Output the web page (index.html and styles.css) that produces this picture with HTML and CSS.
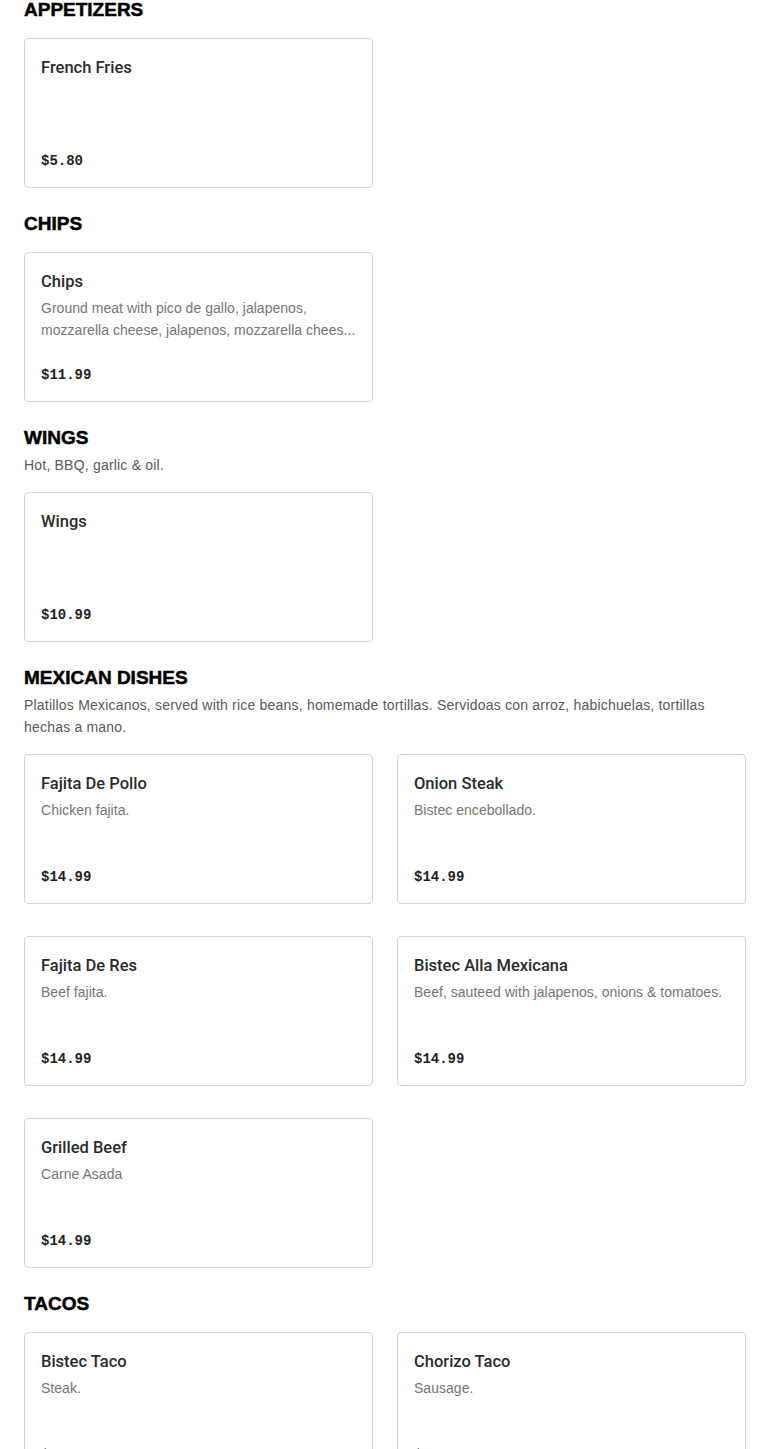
FILE: index.html
```html
<!DOCTYPE html>
<html lang="en">
<head>
<meta charset="utf-8">
<title>Menu</title>
<link rel="stylesheet" href="styles.css">
</head>
<body>
<main class="menu">
  <section class="section">
    <h2 class="section-title">APPETIZERS</h2>
    <div class="grid">
      <article class="card">
        <h3 class="item-name">French Fries</h3>
        <div class="price">$5.80</div>
      </article>
    </div>
  </section>

  <section class="section">
    <h2 class="section-title">CHIPS</h2>
    <div class="grid">
      <article class="card">
        <h3 class="item-name">Chips</h3>
        <p class="item-desc">Ground meat with pico de gallo, jalapenos, mozzarella cheese, jalapenos, mozzarella chees...</p>
        <div class="price">$11.99</div>
      </article>
    </div>
  </section>

  <section class="section">
    <h2 class="section-title">WINGS</h2>
    <p class="section-desc">Hot, BBQ, garlic &amp; oil.</p>
    <div class="grid">
      <article class="card">
        <h3 class="item-name">Wings</h3>
        <div class="price">$10.99</div>
      </article>
    </div>
  </section>

  <section class="section">
    <h2 class="section-title">MEXICAN DISHES</h2>
    <p class="section-desc">Platillos Mexicanos, served with rice beans, homemade tortillas. Servidoas con arroz, habichuelas, tortillas hechas a mano.</p>
    <div class="grid">
      <article class="card">
        <h3 class="item-name">Fajita De Pollo</h3>
        <p class="item-desc">Chicken fajita.</p>
        <div class="price">$14.99</div>
      </article>
      <article class="card">
        <h3 class="item-name">Onion Steak</h3>
        <p class="item-desc">Bistec encebollado.</p>
        <div class="price">$14.99</div>
      </article>
      <article class="card">
        <h3 class="item-name">Fajita De Res</h3>
        <p class="item-desc">Beef fajita.</p>
        <div class="price">$14.99</div>
      </article>
      <article class="card">
        <h3 class="item-name">Bistec Alla Mexicana</h3>
        <p class="item-desc">Beef, sauteed with jalapenos, onions &amp; tomatoes.</p>
        <div class="price">$14.99</div>
      </article>
      <article class="card">
        <h3 class="item-name">Grilled Beef</h3>
        <p class="item-desc">Carne Asada</p>
        <div class="price">$14.99</div>
      </article>
    </div>
  </section>

  <section class="section">
    <h2 class="section-title">TACOS</h2>
    <div class="grid">
      <article class="card">
        <h3 class="item-name">Bistec Taco</h3>
        <p class="item-desc">Steak.</p>
        <div class="price">$3.50</div>
      </article>
      <article class="card">
        <h3 class="item-name">Chorizo Taco</h3>
        <p class="item-desc">Sausage.</p>
        <div class="price">$3.50</div>
      </article>
    </div>
  </section>
</main>
</body>
</html>
```

FILE: styles.css
```css
* {
  box-sizing: border-box;
}

html, body {
  margin: 0;
  padding: 0;
  background: #ffffff;
}

body {
  font-family: "Liberation Sans", Arial, sans-serif;
  color: #1f1f1f;
}

.menu {
  margin-top: -2px;
  padding: 0 24px;
}

.section {
  margin-bottom: 24px;
}

.section-title {
  margin: 0 0 16px 0;
  font-family: "Liberation Sans", Arial, sans-serif;
  font-size: 19px;
  line-height: 24px;
  font-weight: 700;
  color: #000000;
  -webkit-text-stroke: 0.5px #000000;
  letter-spacing: 0;
}

.section-desc {
  margin: -12px 0 16px 0;
  font-size: 14px;
  line-height: 22px;
  letter-spacing: 0.2px;
  color: #595959;
}

.grid {
  display: grid;
  grid-template-columns: 349px 349px;
  column-gap: 24px;
  row-gap: 32px;
}

.card {
  display: flex;
  flex-direction: column;
  height: 150px;
  padding: 17px 16px 16px 16px;
  border: 1px solid #d3d3d3;
  border-radius: 4px;
  background: #ffffff;
}

.item-name {
  margin: 0;
  font-family: Roboto, "Liberation Sans", Arial, sans-serif;
  font-size: 16.5px;
  line-height: 24px;
  font-weight: 500;
  color: #2b2b2b;
}

.item-desc {
  margin: 3px 0 0 0;
  font-size: 14px;
  line-height: 22px;
  letter-spacing: 0.03px;
  color: #767676;
  display: -webkit-box;
  -webkit-line-clamp: 2;
  -webkit-box-orient: vertical;
  overflow: hidden;
}

.price {
  margin-top: auto;
  font-family: "Liberation Mono", "Courier New", monospace;
  font-size: 14px;
  line-height: 20px;
  font-weight: 700;
  color: #1f1f1f;
}
```
